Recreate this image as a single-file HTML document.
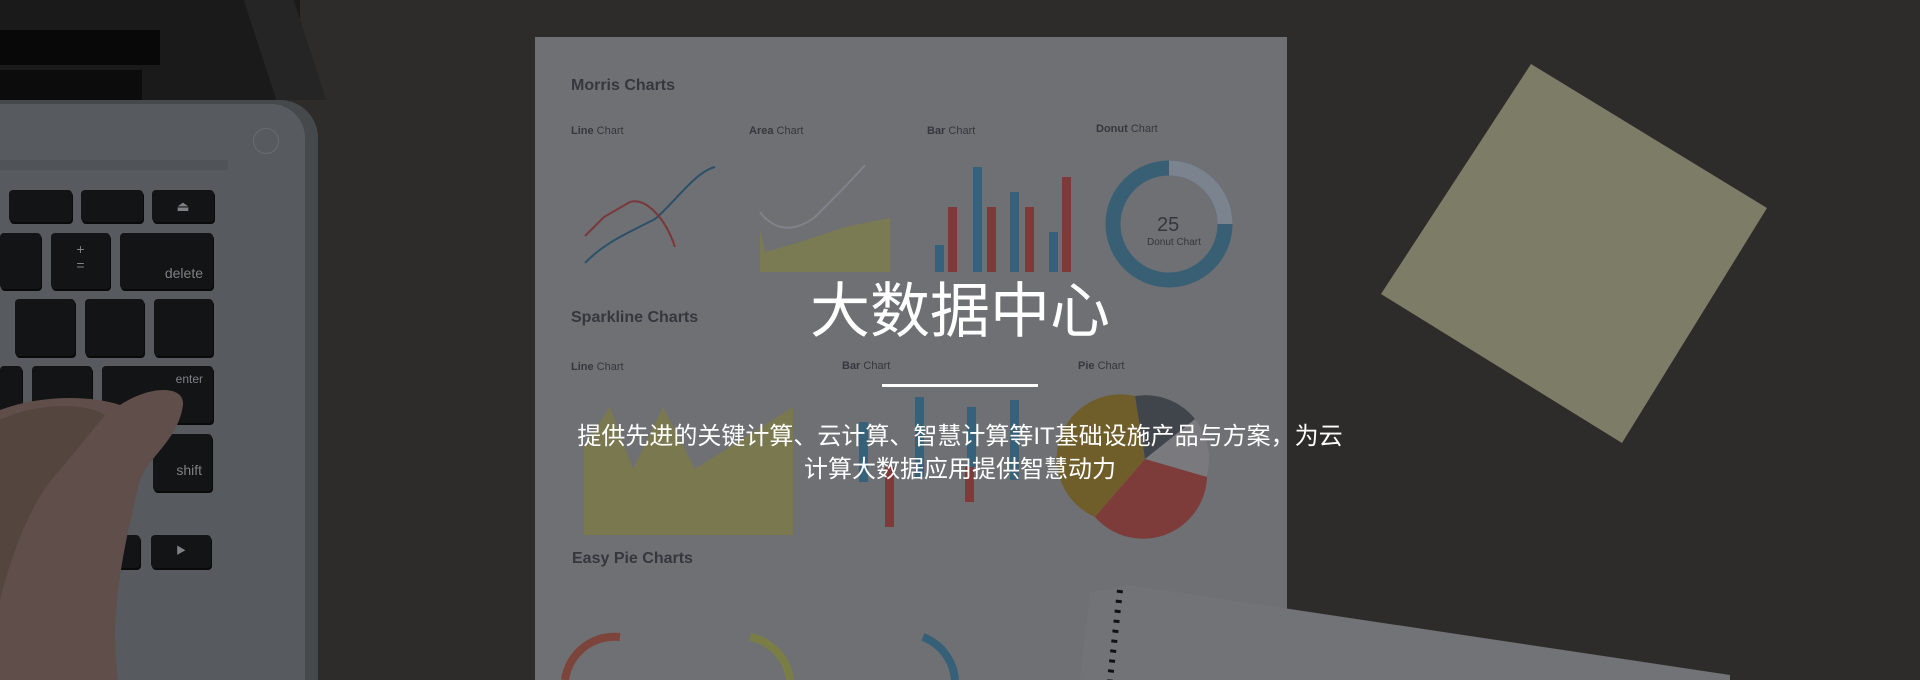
<!DOCTYPE html>
<html><head><meta charset="utf-8"><style>
*{margin:0;padding:0;box-sizing:border-box}
body{width:1920px;height:680px;overflow:hidden;background:#2e2c2b;position:relative;font-family:"Liberation Sans","Noto Sans CJK SC",sans-serif}
.a{position:absolute}
.key{position:absolute;background:#131415;border-radius:4px;box-shadow:1px 2px 0 #0a0a0a;color:#7e8083;font-size:14px}
.pt{position:absolute;color:#34373d;font-size:11px}
.pt b{font-weight:bold}
</style></head><body>
<div class="a" style="left:0;top:0;width:300px;height:100px;background:#1a1a1b"></div>
<div class="a" style="left:0;top:30px;width:160px;height:35px;background:#080808"></div>
<div class="a" style="left:0;top:70px;width:142px;height:38px;background:#0c0c0c"></div>
<div class="a" style="left:260px;top:0;width:50px;height:100px;background:#252526;transform:skewX(18deg)"></div>
<div class="a" style="left:0;top:100px;width:318px;height:580px;background:#46494c;border-top-right-radius:38px"></div>
<div class="a" style="left:0;top:104px;width:305px;height:576px;background:#575b5f;border-top-right-radius:34px"></div>
<div class="a" style="left:0;top:160px;width:228px;height:10px;background:#505357"></div>
<div class="a" style="left:253px;top:128px;width:26px;height:26px;border:1px solid #686c70;border-radius:50%"></div>
<div class="key" style="left:9px;top:190px;width:63px;height:32px"></div>
<div class="key" style="left:81px;top:190px;width:62px;height:32px"></div>
<div class="key" style="left:152px;top:190px;width:62px;height:32px;text-align:center;line-height:32px">⏏</div>
<div class="key" style="left:0;top:233px;width:41px;height:56px"></div>
<div class="key" style="left:51px;top:233px;width:59px;height:56px;text-align:center;padding-top:8px">+<br>=</div>
<div class="key" style="left:120px;top:233px;width:93px;height:56px;text-align:right;padding:32px 10px 0 0">delete</div>
<div class="key" style="left:15px;top:299px;width:60px;height:57px"></div>
<div class="key" style="left:85px;top:299px;width:59px;height:57px"></div>
<div class="key" style="left:154px;top:299px;width:59px;height:57px"></div>
<div class="key" style="left:0;top:366px;width:22px;height:57px"></div>
<div class="key" style="left:32px;top:366px;width:60px;height:57px"></div>
<div class="key" style="left:102px;top:366px;width:111px;height:57px;text-align:right;padding:6px 10px 0 0;font-size:12px">enter</div>
<div class="key" style="left:153px;top:434px;width:59px;height:57px;text-align:right;padding:28px 10px 0 0">shift</div>
<div class="key" style="left:27px;top:535px;width:113px;height:33px"></div>
<div class="key" style="left:151px;top:535px;width:60px;height:33px;text-align:center;line-height:33px;font-size:10px">▶</div>
<svg class="a" style="left:0;top:0" width="320" height="680">
<path d="M0 410 C40 395 90 395 120 405 C150 385 185 385 183 405 C178 440 150 455 140 480 C120 560 110 620 118 680 L0 680 Z" fill="#5f4e4a"/>
<path d="M0 420 C30 405 80 400 105 415 L60 470 C30 500 10 560 0 600Z" fill="#54453f"/>
</svg>
<div class="a" style="left:535px;top:37px;width:752px;height:643px;background:#6e7074"></div>
<div class="pt" style="left:571px;top:77px;font-size:16px;font-weight:bold">Morris Charts</div>
<div class="pt" style="left:571px;top:125px"><b>Line</b> Chart</div>
<div class="pt" style="left:749px;top:125px"><b>Area</b> Chart</div>
<div class="pt" style="left:927px;top:125px"><b>Bar</b> Chart</div>
<div class="pt" style="left:1096px;top:123px"><b>Donut</b> Chart</div>
<svg class="a" style="left:535px;top:37px" width="752" height="643">
<g fill="none" stroke-width="2">
<path d="M50 226 C70 205 95 195 120 182 C140 165 160 135 180 130" stroke="#2b5068"/>
<path d="M50 199 L69 180 L95 165 C110 160 130 180 140 210" stroke="#7a383b"/>
<path d="M225 175 C240 195 260 195 280 180 C300 160 320 140 330 128" stroke="#80838a"/>
</g>
<path d="M225 192 L230 215 L265 205 L310 190 L355 181 L355 235 L225 235Z" fill="#7a7b52"/>
<g fill="#35627a"><rect x="400" y="208" width="9" height="27"/><rect x="438" y="130" width="9" height="105"/><rect x="475" y="155" width="9" height="80"/><rect x="514" y="195" width="9" height="40"/></g>
<g fill="#7e3a39"><rect x="413" y="170" width="9" height="65"/><rect x="452" y="170" width="9" height="65"/><rect x="490" y="170" width="9" height="65"/><rect x="527" y="140" width="9" height="95"/></g>
<circle cx="634" cy="187" r="56" fill="none" stroke="#385f74" stroke-width="15"/>
<path d="M634 131 A56 56 0 0 1 690 187" fill="none" stroke="#7a838e" stroke-width="15"/>
<text x="622" y="194" font-size="20" fill="#34373d" font-family="Liberation Sans">25</text>
<text x="612" y="208" font-size="10" fill="#34373d" font-family="Liberation Sans">Donut Chart</text>
<path d="M49 498 L49 410 L75 370 L98 432 L128 370 L160 432 L258 370 L258 498Z" fill="#7a784f"/>
<g fill="#35627a"><rect x="324" y="385" width="9" height="60"/><rect x="380" y="360" width="9" height="80"/><rect x="432" y="370" width="9" height="60"/><rect x="475" y="363" width="9" height="80"/></g>
<g fill="#7e3a39"><rect x="350" y="430" width="9" height="60"/><rect x="430" y="430" width="9" height="35"/></g>
<circle cx="610" cy="422" r="64" fill="#7a7a7e"/>
<path d="M610 422 L600 359 A64 64 0 0 0 560 480Z" fill="#6f5d2a"/>
<path d="M610 422 L560 480 A64 64 0 0 0 672 440Z" fill="#7d3b3a"/>
<path d="M610 422 L600 359 A64 64 0 0 1 660 382Z" fill="#40454c"/>
<path d="M30 643 A50 50 0 0 1 85 600" fill="none" stroke="#7d443b" stroke-width="8"/>
<path d="M215 600 A50 50 0 0 1 255 643" fill="none" stroke="#7a7e45" stroke-width="8"/>
<path d="M388 600 A50 50 0 0 1 420 643" fill="none" stroke="#365f78" stroke-width="8"/>
</svg>
<div class="pt" style="left:571px;top:309px;font-size:16px;font-weight:bold">Sparkline Charts</div>
<div class="pt" style="left:571px;top:361px"><b>Line</b> Chart</div>
<div class="pt" style="left:842px;top:360px"><b>Bar</b> Chart</div>
<div class="pt" style="left:1078px;top:360px"><b>Pie</b> Chart</div>
<div class="pt" style="left:572px;top:550px;font-size:16px;font-weight:bold">Easy Pie Charts</div>
<svg class="a" style="left:1070px;top:580px" width="660" height="100">
<path d="M20 12 L60 5 L660 95 L660 100 L10 100Z" fill="#727376"/>
<path d="M50 10 L40 100" stroke="#111" stroke-width="6" stroke-dasharray="3 7"/>
</svg>
<svg class="a" style="left:0;top:0" width="1920" height="680"><polygon points="1531,64 1767,208 1622,443 1381,294" fill="#7d7c66"/></svg>
<div class="a" style="left:0;top:272px;width:1920px;text-align:center;color:#fff;font-size:60px;line-height:80px">大数据中心</div>
<div class="a" style="left:882px;top:384px;width:156px;height:3px;background:#fff"></div>
<div class="a" style="left:540px;top:420px;width:840px;text-align:center;color:#fff;font-size:24px;line-height:33px">提供先进的关键计算、云计算、智慧计算等IT基础设施产品与方案，为云<br>计算大数据应用提供智慧动力</div>
</body></html>
